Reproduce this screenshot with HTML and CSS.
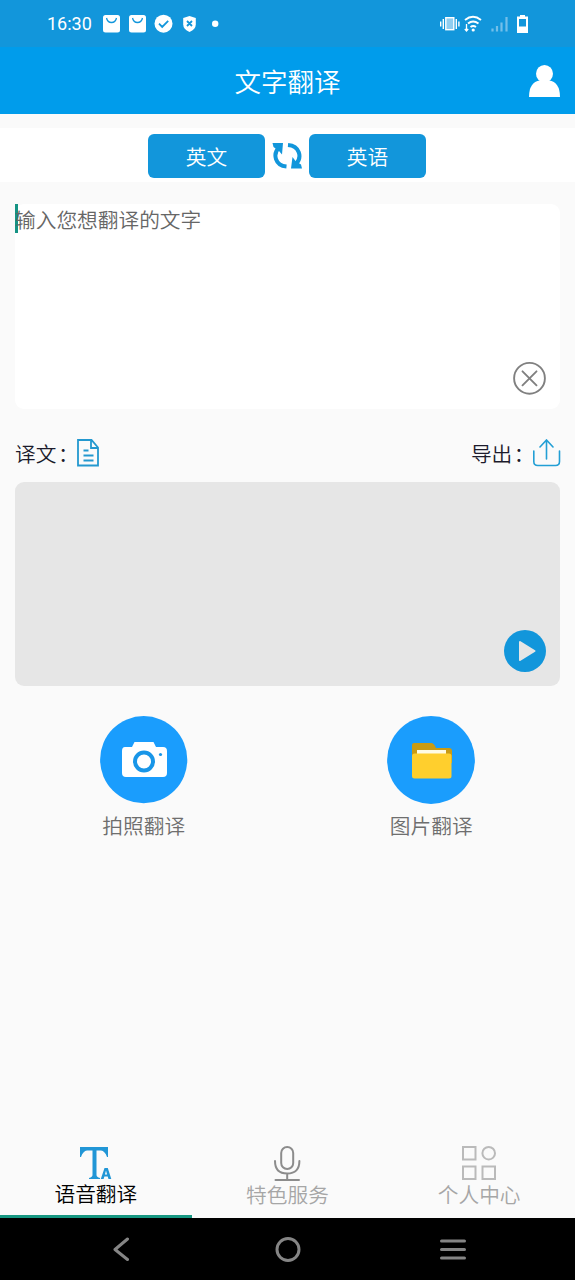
FILE: index.html
```html
<!DOCTYPE html>
<html lang="zh-CN">
<head>
<meta charset="utf-8">
<title>文字翻译</title>
<link rel="stylesheet" href="styles.css">
</head>
<body>
<div class="status">
  <span class="clock">16:30</span>
  <svg class="status-left" width="120" height="20" viewBox="0 0 120 20">
    <g fill="#fff">
      <rect x="1" y="1" width="17" height="17.500" rx="2.5"/>
      <rect x="27" y="1" width="17" height="17.500" rx="2.5"/>
      <circle cx="61.5" cy="9.700" r="9"/>
      <path d="M87.500 2l6.300 2v6.500q0 4.500-6.300 7.500q-6.300-3-6.300-7.500V4z"/>
      <circle cx="113.200" cy="9.700" r="3.200"/>
    </g>
    <g fill="none" stroke="#1296db" stroke-width="1.300">
      <path d="M4.500 4q1 4.500 5 4.500t5-4.500M30.500 4q1 4.500 5 4.500t5-4.500"/>
      <path d="M57 9.700l3.200 3.200 6-6M85 7l5 5M90 7l-5 5" stroke-width="1.800"/>
    </g>
  </svg>
  <svg class="status-right" width="90" height="22" viewBox="0 0 90 22">
    <rect x="5.800" y="4.700" width="8" height="12" fill="#8fcdf0" stroke="#fff" stroke-width="1.400"/>
    <path d="M3.300 6v10M.7 8.500v5M16.300 6v10M18.900 8.500v5" stroke="#fff" stroke-width="1.400"/>
    <path d="M25 7q8-6.500 16 0M28 10.500q5-4.200 10.500 0M30.500 14q2.700-2 5.500 0" fill="none" stroke="#fff" stroke-width="1.900"/>
    <circle cx="33.200" cy="17" r="1.600" fill="#fff"/>
    <path d="M26.500 11v7M24.800 16l1.700 2 1.700-2" fill="none" stroke="#fff" stroke-width="1.300"/>
    <path d="M52.500 15.500v3M57 13v5.500M61.500 9.500v9M66.500 4v14.500" stroke="#73bfe9" stroke-width="2.200"/>
    <path d="M80 2h5v1.500h3V20H77V3.500h3z" fill="#fff"/>
    <rect x="79" y="6" width="7" height="7.500" fill="#1296db"/>
  </svg>
</div>
<header class="header">
  <h1>文字翻译</h1>
  <svg class="user" width="32" height="32" viewBox="0 0 32 32" fill="#fff"><ellipse cx="15.500" cy="8.800" rx="8.500" ry="8.800"/><path d="M0 32Q0 17 11 15.500h9Q31 17 31 32z"/></svg>
</header>
<section class="languages">
  <button class="language">英文</button>
  <svg class="swap" width="30" height="26" viewBox="0 0 30 26">
    <g fill="none" stroke="#1296db" stroke-width="4"><path d="M14.500 23.500C3 22.500 .5 11 7 4.500"/><path d="M16 2C27.500 3 30.500 14 24 21"/></g>
    <path d="M.5 0H11L10 11.500 7 8 1.500 4zM30 25.500H19l1.500-11.500 3 4 5.500 3.500z" fill="#1296db"/>
  </svg>
  <button class="language">英语</button>
</section>
<main class="content">
  <section class="source">
    <p class="placeholder">输入您想翻译的文字</p>
    <svg class="clear" width="34" height="34" viewBox="0 0 34 34" fill="none" stroke="#808080" stroke-width="1.900"><circle cx="16.500" cy="17.300" r="15.400"/><path d="M9.500 10.300l14 14M23.500 10.300l-14 14" stroke-linecap="round"/></svg>
  </section>
  <div class="labels">
    <div class="label"><span>译文<span class="colon">：</span></span>
      <svg width="23" height="28" viewBox="0 0 23 28" fill="none" stroke="#2398cf" stroke-width="1.800"><path d="M1 1h13.500L21 8.500V26.500H1zM14 1v8h7M6.500 11.500h5M6.500 16.500h10M6.500 21.500h10"/></svg>
    </div>
    <div class="label export"><span>导出<span class="colon">：</span></span>
      <svg width="28" height="28" viewBox="0 0 28 28" fill="none" stroke="#229fd5" stroke-width="1.600" stroke-linecap="round"><path d="M.8 12v10.500q0 4 4 4h17.700q4 0 4-4V12M13.500 20V1M7 8l6.500-7L20 8"/></svg>
    </div>
  </div>
  <section class="result">
    <svg width="42" height="42" viewBox="0 0 42 42"><circle cx="21" cy="21" r="21" fill="#1296db"/><path d="M16 12l14.500 9L16 30z" fill="#e6e6e6" stroke="#e6e6e6" stroke-width="2" stroke-linejoin="round"/></svg>
  </section>
</main>
<section class="actions">
  <div class="action">
    <svg width="88" height="88" viewBox="0 0 88 88"><circle cx="43.700" cy="43.700" r="43.600" fill="#1a9dfd"/><path d="M25 31h7l2.500-5h19l2.500 5h7q4 0 4 4v22q0 4-4 4H26q-4 0-4-4V35q0-4 3-4z" fill="#fff"/><circle cx="44" cy="45.500" r="9" fill="none" stroke="#1996e8" stroke-width="4"/><circle cx="60.500" cy="38.500" r="1.600" fill="#1996e8"/></svg>
    <span>拍照翻译</span>
  </div>
  <div class="action">
    <svg width="88" height="88" viewBox="0 0 88 88"><circle cx="44" cy="44" r="43.900" fill="#1a9dfd"/><path d="M25 29q0-2 2-2h17q3 0 5 5h13q3 0 3 3v12H25z" fill="#c99b14"/><path d="M30 34h29v6H30z" fill="#fffbe3"/><rect x="25" y="37.500" width="39.500" height="25" rx="2.500" fill="#ffcf2d"/></svg>
    <span>图片翻译</span>
  </div>
</section>
<nav class="tabs">
  <div class="tab active">
    <svg width="36" height="36" viewBox="0 0 36 36" fill="#2196d6"><path d="M2 2h28v10h-1q-2-6-6-6.500h-4.500V30q0 2 3.500 3v1H11v-1q3.500-1 3.500-3V5.500H9Q5 6 3 12H2z"/><path fill-rule="evenodd" d="M26.500 23h3.300l3.500 11h-2.800l-.8-2.500h-3.300l-.8 2.500h-2.800zm1.500 2.600l-1.100 4h2.200z"/></svg>
    <span>语音翻译</span>
  </div>
  <div class="tab">
    <svg width="36" height="36" viewBox="0 0 36 36" fill="none" stroke="#8c8c8c" stroke-width="2"><rect x="12.200" y="2" width="12" height="22" rx="6"/><path d="M6 16q0 12.500 12.200 12.500T30.400 16M18.200 28.500v6M6.500 35h23.500" stroke-linecap="round"/></svg>
    <span>特色服务</span>
  </div>
  <div class="tab">
    <svg width="36" height="36" viewBox="0 0 36 36" fill="none" stroke="#bababa" stroke-width="2"><path d="M2 2h12.500v12.500H2zM2 21.500h12.500V34H2zM21.500 21.500H34V34H21.500z"/><circle cx="27.700" cy="8.200" r="6.300"/></svg>
    <span>个人中心</span>
  </div>
</nav>
<footer class="system-nav">
  <svg width="16" height="24" viewBox="0 0 16 24"><path d="M14.500 2L2 12.500l12.500 10" /></svg>
  <svg width="26" height="26" viewBox="0 0 26 26"><circle cx="13" cy="13.500" r="11"/></svg>
  <svg width="26" height="22" viewBox="0 0 26 22"><path d="M1.500 3h23M1.500 11.500h23M1.500 20h23"/></svg>
</footer>
</body>
</html>
```
FILE: styles.css
```css
* { box-sizing: border-box; }
body {
  margin: 0;
  width: 575px;
  height: 1280px;
  display: flex;
  flex-direction: column;
  overflow: hidden;
  background: #fafafa;
  font-family: "Noto Sans CJK SC", sans-serif;
  font-weight: 350;
  font-size: 20.700px;
  line-height: 30px;
}
svg { display: block; flex: none; }
.status {
  height: 47px;
  padding: 0 45px 0 47px;
  display: flex;
  align-items: center;
  background: #1296db;
}
.clock {
  width: 55px;
  color: #fff;
  font-family: Roboto, sans-serif;
  font-weight: 400;
  font-size: 18px;
}
.status-right { margin-left: auto; }
.header {
  height: 67px;
  padding: 0 14px 0 16px;
  display: grid;
  grid-template-columns: 32px 1fr 32px;
  align-items: center;
  background: #009ceb;
  color: #fff;
}
.header h1 {
  grid-column: 2;
  margin: 0 1px 0 -1px;
  text-align: center;
  font-size: 26.500px;
  font-weight: 350;
}
.user { margin-top: 1px; }
.languages {
  height: 54px;
  margin-top: 14px;
  padding: 1px 1px 0 0;
  display: flex;
  justify-content: center;
  align-items: center;
  gap: 7px;
  background: #fff;
}
.language {
  width: 117px;
  height: 44px;
  padding: 0;
  border: 0;
  border-radius: 6px;
  background: #1296db;
  color: #fff;
  font: inherit;
}
.content { padding: 22px 15px 0; }
.source {
  height: 205px;
  padding-right: 13px;
  display: flex;
  flex-direction: column;
  justify-content: space-between;
  border-radius: 9px;
  background: #fff;
}
.placeholder {
  height: 29px;
  margin: 0;
  color: #666;
  background: linear-gradient(#159384, #159384) left / 3px 100% no-repeat;
}
.clear { align-self: flex-end; margin-bottom: 14px; }
.labels {
  height: 73px;
  padding-top: 15px;
  display: flex;
  justify-content: space-between;
  align-items: center;
  color: #1c1b2c;
}
.label { display: flex; align-items: center; white-space: nowrap; }
.colon { margin: 0 -1.500px 0 1.500px; }
.export { margin-right: -1px; }
.result {
  height: 204px;
  padding: 0 14px 14px 0;
  display: flex;
  justify-content: flex-end;
  align-items: flex-end;
  border-radius: 9px;
  background: #e6e6e6;
}
.actions {
  padding-top: 30px;
  display: grid;
  grid-template-columns: 1fr 1fr;
}
.action {
  display: flex;
  flex-direction: column;
  align-items: center;
  gap: 6px;
  color: #6e6e6e;
}
.tabs {
  height: 73px;
  margin-top: auto;
  display: grid;
  grid-template-columns: repeat(3, 1fr);
}
.tab {
  display: flex;
  flex-direction: column;
  align-items: center;
  color: #a6a6a6;
}
.tab span { margin-top: -2px; }
.tab.active span { margin-top: -3px; }
.active {
  color: #000;
  border-bottom: 3px solid #169782;
}
.system-nav {
  height: 62px;
  padding: 0 109px 0 113px;
  display: grid;
  grid-template-columns: 16px 1fr 26px;
  align-items: center;
  background: #000;
}
.system-nav svg {
  fill: none;
  stroke: #858585;
  stroke-width: 3;
  stroke-linecap: round;
  stroke-linejoin: round;
}
.system-nav svg:nth-child(2) { justify-self: center; margin-left: 6px; }
```
